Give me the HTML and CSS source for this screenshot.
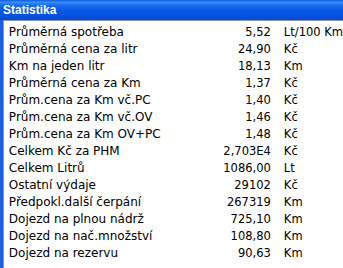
FILE: index.html
```html
<html>

<head>
    <title>Statistika</title>
    <link rel="stylesheet" href="styles.css">
</head>

<body>
    <div id="win">
        <div class="win-title">Statistika</div>
        <div class="win-body">
            <div class="win-frame"></div>
            <div id="stats">
                <div class="row"><span>Průměrná spotřeba</span><span class="val">5,52</span><span class="unit">Lt/100 Km</span></div>
                <div class="row"><span>Průměrná cena za litr</span><span class="val">24,90</span><span class="unit">Kč</span></div>
                <div class="row"><span>Km na jeden litr</span><span class="val">18,13</span><span class="unit">Km</span></div>
                <div class="row"><span>Průměrná cena za Km</span><span class="val">1,37</span><span class="unit">Kč</span></div>
                <div class="row"><span>Prům.cena za Km vč.PC</span><span class="val">1,40</span><span class="unit">Kč</span></div>
                <div class="row"><span>Prům.cena za Km vč.OV</span><span class="val">1,46</span><span class="unit">Kč</span></div>
                <div class="row"><span>Prům.cena za Km OV+PC</span><span class="val">1,48</span><span class="unit">Kč</span></div>
                <div class="row"><span>Celkem Kč za PHM</span><span class="val">2,703E4</span><span class="unit">Kč</span></div>
                <div class="row"><span>Celkem Litrů</span><span class="val">1086,00</span><span class="unit">Lt</span></div>
                <div class="row"><span>Ostatní výdaje</span><span class="val">29102</span><span class="unit">Kč</span></div>
                <div class="row"><span>Předpokl.další čerpání</span><span class="val">267319</span><span class="unit">Km</span></div>
                <div class="row"><span>Dojezd na plnou nádrž</span><span class="val">725,10</span><span class="unit">Km</span></div>
                <div class="row"><span>Dojezd na nač.množství</span><span class="val">108,80</span><span class="unit">Km</span></div>
                <div class="row"><span>Dojezd na rezervu</span><span class="val">90,63</span><span class="unit">Km</span></div>
            </div>
        </div>
    </div>
</body>

</html>
```

FILE: styles.css
```css
body {
    margin: 0;
    background: #ffffff;
    overflow: hidden;
}

#win {
    display: flex;
    flex-direction: column;
    height: 268px;
}

.win-title {
    height: 20px;
    padding-left: 3px;
    box-sizing: border-box;
    padding-top: 3px;
    font-family: 'Liberation Sans', sans-serif;
    font-weight: bold;
    font-size: 12px;
    color: #ffffff;
    background: linear-gradient(to bottom, #0a5ee8 0%, #3d8cf5 12%, #1a6cf0 25%, #0558e6 55%, #0553e0 80%, #0848c8 100%);
}

.win-body {
    flex: 1;
    display: flex;
}

.win-frame {
    width: 3px;
    background: #1a5ee6;
}

#stats {
    flex: 1;
    border-top: 1px solid #8c9bb8;
    border-left: 1px solid #8c9bb8;
    padding-top: 3px;
    padding-left: 5px;
    font-family: 'DejaVu Sans', sans-serif;
    font-size: 12px;
    color: #000000;
}

.row {
    display: grid;
    grid-template-columns: 180px 69px auto;
    column-gap: 13px;
    height: 17px;
    line-height: 17px;
    white-space: nowrap;
}

.val {
    text-align: right;
    font-size: 11.5px;
}

.unit {
    font-size: 11.5px;
}
```
